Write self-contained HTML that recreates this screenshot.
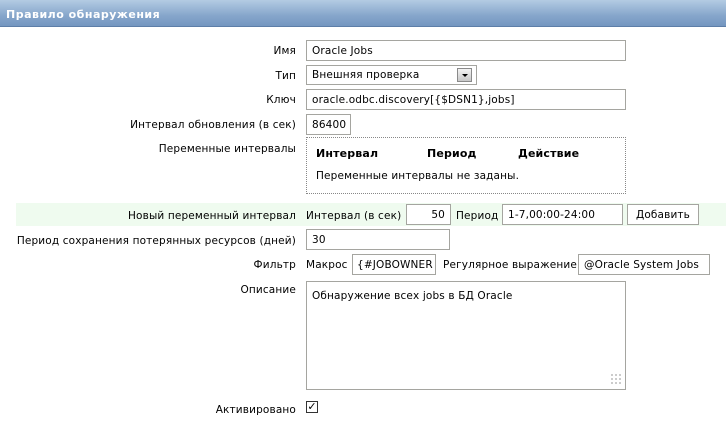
<!DOCTYPE html>
<html><head><meta charset="utf-8"><style>
*{box-sizing:border-box;margin:0;padding:0}
body{width:726px;height:430px;background:#fff;font-family:"DejaVu Sans","Liberation Sans",sans-serif;font-size:10.5px;letter-spacing:0.15px;color:#000;position:relative;overflow:hidden}
.a{position:absolute;white-space:nowrap}
.hd{left:0;top:0;width:726px;height:27px;background:linear-gradient(#b3cbe3,#86a6cb 60%,#7496c0);border-bottom:1px solid #5d7ea8;color:#fff;font-weight:bold;font-size:11px;letter-spacing:0.5px;padding:8px 0 0 6px}
.l{right:430px;text-align:right}
.in{border:1px solid #a5a5a0;background:#fff;padding:4px 5px 0 5px;height:21px;overflow:hidden}
.g{left:16px;top:203px;width:710px;height:23px;background:#effbef}
</style></head><body>
<div class="a hd">Правило обнаружения</div>
<div class="a l" style="top:45px">Имя</div>
<div class="a in" style="left:306px;top:40px;width:320px">Oracle Jobs</div>
<div class="a l" style="top:70px">Тип</div>
<div class="a in" style="left:306px;top:65px;width:171px;height:20px;padding-top:3px">Внешняя проверка</div>
<div class="a" style="left:457px;top:68px;width:15px;height:14px;background:linear-gradient(#f4f4f4,#c8c8c8);border:1px solid #8a8a8a"><div style="position:absolute;left:4px;top:5px;border-left:3px solid transparent;border-right:3px solid transparent;border-top:3px solid #000"></div></div>
<div class="a l" style="top:94px">Ключ</div>
<div class="a in" style="left:306px;top:89px;width:320px">oracle.odbc.discovery[{$DSN1},jobs]</div>
<div class="a l" style="top:119px">Интервал обновления (в сек)</div>
<div class="a in" style="left:306px;top:114px;width:45px">86400</div>
<div class="a l" style="top:143px">Переменные интервалы</div>
<div class="a" style="left:306px;top:137px;width:320px;height:57px;border:1px dotted #888"></div>
<div class="a" style="left:316px;top:147px;font-weight:bold;font-size:11px">Интервал</div>
<div class="a" style="left:427px;top:147px;font-weight:bold;font-size:11px">Период</div>
<div class="a" style="left:518px;top:147px;font-weight:bold;font-size:11px">Действие</div>
<div class="a" style="left:316px;top:170px">Переменные интервалы не заданы.</div>
<div class="a g"></div>
<div class="a l" style="top:210px">Новый переменный интервал</div>
<div class="a" style="left:306px;top:210px">Интервал (в сек)</div>
<div class="a in" style="left:406px;top:204px;width:45px;text-align:right">50</div>
<div class="a" style="left:456px;top:210px">Период</div>
<div class="a in" style="left:502px;top:204px;width:121px">1-7,00:00-24:00</div>
<div class="a in" style="left:627px;top:204px;width:72px;background:#fff;text-align:center;padding:4px 0 0">Добавить</div>
<div class="a l" style="top:235px">Период сохранения потерянных ресурсов (дней)</div>
<div class="a in" style="left:306px;top:229px;width:144px">30</div>
<div class="a l" style="top:259px">Фильтр</div>
<div class="a" style="left:306px;top:259px">Макрос</div>
<div class="a in" style="left:352px;top:254px;width:84px;padding-left:4px">{#JOBOWNER</div>
<div class="a" style="left:443px;top:259px">Регулярное выражение</div>
<div class="a in" style="left:578px;top:254px;width:132px">@Oracle System Jobs</div>
<div class="a l" style="top:284px">Описание</div>
<div class="a in" style="left:306px;top:281px;width:320px;height:109px;padding-top:8px">Обнаружение всех jobs в БД Oracle</div>
<div class="a" style="left:610px;top:373px;width:12px;height:12px;background:radial-gradient(circle,#bbb 0.8px,transparent 1px) 0 0/4px 4px"></div>
<div class="a l" style="top:404px">Активировано</div>
<div class="a" style="left:306px;top:401px;width:12px;height:12px;border:1px solid #333;background:#fff;font-size:11px;line-height:10px;text-align:center;font-weight:bold">✓</div>
</body></html>
